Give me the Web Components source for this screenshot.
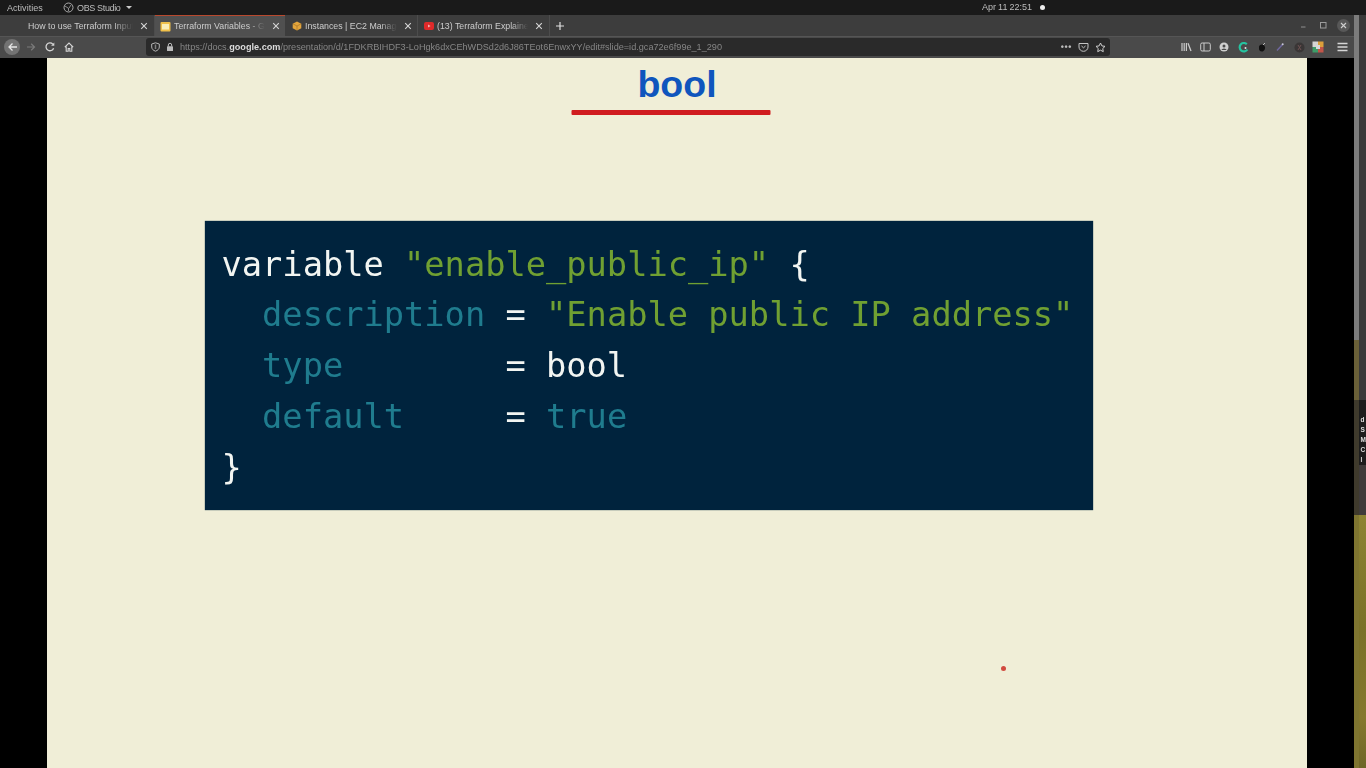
<!DOCTYPE html>
<html lang="en"><head><meta charset="utf-8"><title>Terraform Variables</title>
<style>
html,body{margin:0;padding:0;width:1366px;height:768px;overflow:hidden;background:#000;font-family:"Liberation Sans",sans-serif}
body{display:flex;flex-direction:column}
</style></head><body>
<os-bar></os-bar>
<desk-area>
  <browser-window>
    <tab-strip>
      <browser-tab icon="none">How to use Terraform Input</browser-tab>
      <browser-tab icon="doc" active>Terraform Variables - Go</browser-tab>
      <browser-tab icon="box">Instances | EC2 Manager</browser-tab>
      <browser-tab icon="yt">(13) Terraform Explained</browser-tab>
    </tab-strip>
    <nav-bar></nav-bar>
    <slide-view>
      <slide-title>bool</slide-title>
      <code-block>
        <code-line><c-t k="w">variable </c-t><c-t k="g">"enable_public_ip"</c-t><c-t k="w"> {</c-t></code-line>
        <code-line><c-t k="t">  description</c-t><c-t k="w"> = </c-t><c-t k="g">"Enable public IP address"</c-t></code-line>
        <code-line><c-t k="t">  type       </c-t><c-t k="w"> = bool</c-t></code-line>
        <code-line><c-t k="t">  default    </c-t><c-t k="w"> = </c-t><c-t k="t">true</c-t></code-line>
        <code-line><c-t k="w">}</c-t></code-line>
      </code-block>
    </slide-view>
  </browser-window>
  <side-strip></side-strip>
</desk-area>
<script>
const def=(name,css,html)=>customElements.define(name,class extends HTMLElement{
  constructor(){super();this.attachShadow({mode:'open'}).innerHTML=`<style>${css}</style>${html}`;}
});
const sv=(w,h,inner,extra='')=>`<svg width="${w}" height="${h}" viewBox="0 0 ${w} ${h}" fill="none" ${extra}>${inner}</svg>`;

def('os-bar',`:host{display:flex;height:15px;flex:none;background:#1a1a1a;color:#bdbdbd;font:9px/14px "Liberation Sans",sans-serif;align-items:center;position:relative;filter:blur(.4px)}
.a{margin-left:7px;width:56px;letter-spacing:.03px}.o{display:flex;align-items:center;gap:3px;letter-spacing:-.35px}
.c{position:absolute;left:982px;top:0;height:14px;display:flex;align-items:center;gap:8.500px;letter-spacing:-.05px;word-spacing:-.2px}
i{flex:none;width:5px;height:5px;border-radius:50%;background:#eee;display:block}
b{width:0;height:0;border:3px solid transparent;border-top:3.5px solid #ccc;border-bottom:0;margin-left:2px}`,
`<span class="a">Activities</span><span class="o">${sv(11,11,'<circle cx="5.5" cy="5.5" r="4.5" stroke="#aaa" stroke-width="1"/><path d="M2 4l3 2M8 3L6 6M5.5 9V6" stroke="#aaa" stroke-width=".8"/>')}<span>OBS Studio</span><b></b></span><span class="c"><span>Apr 11 22:51</span><i></i></span>`);

def('desk-area',`:host{display:flex;flex:1;min-height:0}`,`<slot></slot>`);
def('browser-window',`:host{display:flex;flex-direction:column;width:1354px;flex:none;background:#000}`,`<slot></slot>`);

def('tab-strip',`:host{display:flex;height:21px;flex:none;background:#3d3d3d;padding-left:23px;box-sizing:border-box;position:relative;filter:blur(.4px)}
.p{width:20px;display:flex;align-items:center;justify-content:center}
.w{position:absolute;right:0;top:0;height:21px;display:flex;align-items:center;gap:9px;padding-right:4.5px}`,
`<slot></slot><span class="p">${sv(10,10,'<path d="M5 1v8M1 5h8" stroke="#e0e0e0" stroke-width="1.2"/>')}</span>
<span class="w">${sv(9,9,'<path d="M2 6h4.5" stroke="#8f8f8f" stroke-width="1"/>','style="margin-right:2px"')}${sv(9,9,'<rect x="1.5" y="1.5" width="5.5" height="5.500" stroke="#9c9c9c" stroke-width="1"/>')}<span style="width:13px;height:13px;border-radius:50%;background:#585858;display:flex;align-items:center;justify-content:center">${sv(7,7,'<path d="M1 1l5 5M6 1L1 6" stroke="#cfcfcf" stroke-width="1.1"/>')}</span></span>`);

const favs={none:'',
 doc:sv(11,11,'<rect x="0.5" y="1" width="10" height="9.5" rx="1" fill="#f0c04a"/><rect x="2" y="3" width="7" height="5.5" fill="#fbeeb8"/>'),
 box:sv(10,10,'<path d="M5 .5l4.3 2.2v4.6L5 9.5.7 7.3V2.7z" fill="#e3a53c"/><path d="M.9 2.8L5 5l4.1-2.2M5 5v4.4" stroke="#9a6a24" stroke-width=".6"/>'),
 yt:sv(10,8,'<rect width="10" height="8" rx="2" fill="#df2a2a"/><path d="M4 2.4L6.6 4 4 5.6z" fill="#f3b0b0"/>')};
customElements.define('browser-tab',class extends HTMLElement{
 constructor(){super();const s=this.attachShadow({mode:'open'});const act=this.hasAttribute('active');const ic=this.getAttribute('icon');
 const w={none:132,doc:130,box:133,yt:132}[ic];
 const pl={none:5,doc:5,box:7,yt:6}[ic];
 const pr={none:6,doc:5,box:5,yt:6}[ic];
 s.innerHTML=`<style>:host{display:flex;flex:none;width:${w}px;height:21px;box-sizing:border-box;align-items:center;position:relative;padding:0 ${pr}px 0 ${pl}px;gap:3px;color:#cdcdcd;font:8.8px/12px "Liberation Sans",sans-serif;${act?'background:#505050;border-top:1.5px solid #b8492e;':'border-right:1px solid #4c4c4c;'}}
 .t{flex:1;min-width:0;overflow:hidden;white-space:nowrap;-webkit-mask-image:linear-gradient(90deg,#000 80%,transparent 98%);mask-image:linear-gradient(90deg,#000 80%,transparent 98%)}
 .f{display:flex;flex:none}</style>${ic==='none'?'':`<span class="f">${favs[ic]}</span>`}<span class="t"><slot></slot></span>${sv(8,8,'<path d="M1.2 1.2l5.6 5.6M6.8 1.2L1.2 6.8" stroke="#d6d6d6" stroke-width="1.1"/>','style="flex:none;margin-left:2px"')}`;}
});

def('nav-bar',`:host{display:flex;height:22px;flex:none;background:#4a4a4a;align-items:center;box-sizing:border-box;position:relative;filter:blur(.45px);padding-bottom:1px;border-top:1px solid #555}
.l{display:flex;align-items:center;width:146px;flex:none;box-sizing:border-box;padding-left:4px}
.bk{width:16px;height:16px;border-radius:50%;background:#737373;display:flex;align-items:center;justify-content:center}
.u{display:flex;align-items:center;width:964px;height:18px;flex:none;background:#2a2a2a;border-radius:3px;box-sizing:border-box;padding:0 4px 0 5px;font:9.130px/12px "Liberation Sans",sans-serif;color:#868686;white-space:nowrap;gap:6px}
.u b{color:#dcdcdc;font-weight:700}.tx{flex:1;overflow:hidden}
.r{display:flex;align-items:center;flex:1;padding-left:67.600px;box-sizing:border-box}
.r span{width:18.700px;display:flex;justify-content:center;flex:none}`,
`<div class="l"><span class="bk">${sv(11,10,'<path d="M10 5H2M5.5 1.500L2 5l3.500 3.500" stroke="#e6e6e6" stroke-width="1.300"/>')}</span>
<span style="width:22px;display:flex;justify-content:center">${sv(10,10,'<path d="M1 5h7.500M5.200 1.800L8.500 5 5.200 8.200" stroke="#7a7a7a" stroke-width="1.200"/>')}</span>
<span style="width:16px;display:flex;justify-content:center">${sv(10,10,'<path d="M8.600 6.200A3.900 3.900 0 1 1 7.800 2.200" stroke="#d6d6d6" stroke-width="1.300"/><path d="M9.300 .6v3.200H6.100z" fill="#d6d6d6"/>')}</span>
<span style="width:22px;display:flex;justify-content:center">${sv(10,10,'<path d="M.8 5.200L5 1l4.200 4.200M2.200 4.500v4.700h2V6.500h1.600v2.700h2V4.500" stroke="#d6d6d6" stroke-width="1.100"/>')}</span></div>
<div class="u">${sv(9,10,'<path d="M4.500.8L8.300 2v3c0 2-1.600 3.400-3.800 4.200C2.300 8.400.7 7 .7 5V2z" stroke="#b5b5b5" stroke-width="1"/><path d="M4.500 2.500v4.500" stroke="#808080" stroke-width="1.500"/>')}
${sv(8,10,'<rect x="1" y="4.300" width="6" height="4.700" rx=".6" fill="#bcbcbc"/><path d="M2.300 4.500V3a1.700 1.700 0 0 1 3.400 0v1.500" stroke="#bcbcbc" stroke-width="1"/>')}
<span class="tx">https://docs.<b>google.com</b>/presentation/d/1FDKRBIHDF3-LoHgk6dxCEhWDSd2d6J86TEot6EnwxYY/edit#slide=id.gca72e6f99e_1_290</span>
<span style="color:#bdbdbd;font-weight:700;letter-spacing:.6px;font-size:9px;margin-right:0">•••</span>
${sv(11,10,'<path d="M1 1.500h9v3.500a4.500 4.300 0 0 1-9 0z" stroke="#c4c4c4" stroke-width="1"/><path d="M3.500 4L5.500 5.800 7.500 4" stroke="#c4c4c4" stroke-width="1"/>')}
${sv(11,11,'<path d="M5.500 1l1.400 2.900 3.100.45-2.250 2.200.53 3.100-2.780-1.470-2.780 1.470.53-3.100L1 4.350l3.100-.45z" stroke="#d0d0d0" stroke-width="1"/>')}</div>
<div class="r">
<span>${sv(11,10,'<path d="M1 1v8M3.200 1v8M5.400 1v8" stroke="#cacaca" stroke-width="1.200"/><path d="M7 1.200L10 9" stroke="#cacaca" stroke-width="1.300"/>')}</span>
<span>${sv(11,10,'<rect x=".7" y="1" width="9.600" height="8" rx="1.400" stroke="#cacaca" stroke-width="1"/><path d="M4 1v8" stroke="#cacaca" stroke-width="1"/>')}</span>
<span>${sv(10,10,'<circle cx="5" cy="5" r="4.500" fill="#d0d0d0"/><circle cx="5" cy="4" r="1.500" fill="#4a4a4a"/><path d="M2.300 8a2.800 2.200 0 0 1 5.400 0" fill="#4a4a4a"/>')}</span>
<span>${sv(11,11,'<path d="M8.800 2.200A4.200 4.200 0 1 0 9.400 7.500" stroke="#25c4a0" stroke-width="2.200"/><circle cx="7.500" cy="6" r="1" fill="#e6e6e6"/>')}</span>
<span>${sv(10,11,'<path d="M2 6a3 3 0 0 1 6-1c.4 2-.8 4.500-3 4.500S1.800 8 2 6z" fill="#111"/><path d="M6 3l2-2" stroke="#bbb" stroke-width="1"/>')}</span>
<span>${sv(10,10,'<path d="M2 8.500L7.500 2.500" stroke="#6f679f" stroke-width="1.400"/><circle cx="7.700" cy="2.300" r="1" fill="#c8c8d8"/>')}</span>
<span>${sv(11,11,'<circle cx="5.500" cy="5.500" r="5" fill="#3a3636"/><path d="M4 3l3 5M7 3L4 8" stroke="#6e5252" stroke-width="1"/>')}</span>
<span>${sv(12,12,'<rect x=".5" y=".5" width="5.500" height="5.500" fill="#d4d4d4"/><rect x="6" y=".5" width="5.500" height="5.500" fill="#dd9f3a"/><rect x=".5" y="6" width="5.500" height="5.500" fill="#3e9c68"/><rect x="6" y="6" width="5.500" height="5.500" fill="#c25549"/><rect x="4" y="4" width="4" height="4" fill="#d8d8d8"/>')}</span>
<span style="margin-left:6.500px">${sv(11,10,'<path d="M.5 1.500h10M.5 5h10M.5 8.500h10" stroke="#d6d6d6" stroke-width="1.300"/>')}</span>
</div>`);

def('slide-view',`:host{display:flex;flex-direction:column;flex:1;min-height:0;margin:0 47px;background:#f0eed7;position:relative;width:1260px;overflow:hidden}
.dot{position:absolute;left:953.500px;top:608px;width:5px;height:5px;border-radius:50%;background:#d14a3f}`,
`<slot></slot><span class="dot"></span>`);

def('slide-title',`:host{display:flex;flex-direction:column;align-items:center;flex:none;height:163px;box-sizing:border-box;padding-top:5px;color:#0f55bd;font:700 37.500px/42px "Liberation Sans",sans-serif}
.u{width:199px;height:5px;background:#d01c1f;border-radius:1px;margin-top:5px;transform:translateX(-6.500px)}`,
`<span><slot></slot></span><div class="u"></div>`);

def('code-block',`:host{display:flex;flex-direction:column;margin-left:158px;width:888px;height:289px;flex:none;box-sizing:border-box;background:#00233d;padding:18.500px 0 0 16.500px;font:33.700px/50.750px "DejaVu Sans Mono",monospace;box-shadow:0 0 1px #00233d}`,`<slot></slot>`);
def('code-line',`:host{display:block;height:50.750px;white-space:pre;filter:blur(.35px)}`,`<slot></slot>`);
customElements.define('c-t',class extends HTMLElement{constructor(){super();const c={w:'#f2f5f2',g:'#70a032',t:'#1f7c8e'}[this.getAttribute('k')];this.attachShadow({mode:'open'}).innerHTML=`<style>:host{color:${c};white-space:pre}</style><slot></slot>`}});

def('side-strip',`:host{display:flex;flex:1;min-width:0;background:#3a3a3a}
.edge{width:5px;flex:none;display:flex;flex-direction:column}
.g{height:325px;flex:none;background:#7c7c7c}.br{height:60px;flex:none;background:#6a6038}.dk{height:115px;flex:none;background:#3f3a2c}.ol{flex:1;background:#7f7530}
.col{flex:1;min-width:0;display:flex;flex-direction:column}
.c1{height:385px;flex:none;background:#3a3a3a}
.tx{height:65px;flex:none;background:#1d1d1d;color:#ddd;font:700 6.500px/10px "Liberation Sans",sans-serif;padding:15px 0 0 1.500px;box-sizing:border-box;white-space:pre;filter:blur(.3px)}
.c3{height:50px;flex:none;background:#3f3b3a}
.wp{flex:1;background:linear-gradient(180deg,#8d8433,#7a7128 45%,#85782d 80%,#6e6627)}`,
`<div class="edge"><div class="g"></div><div class="br"></div><div class="dk"></div><div class="ol"></div></div>
<div class="col"><div class="c1"></div><div class="tx">d
S
M
C
l</div><div class="c3"></div><div class="wp"></div></div>`);
</script>
</body></html>
